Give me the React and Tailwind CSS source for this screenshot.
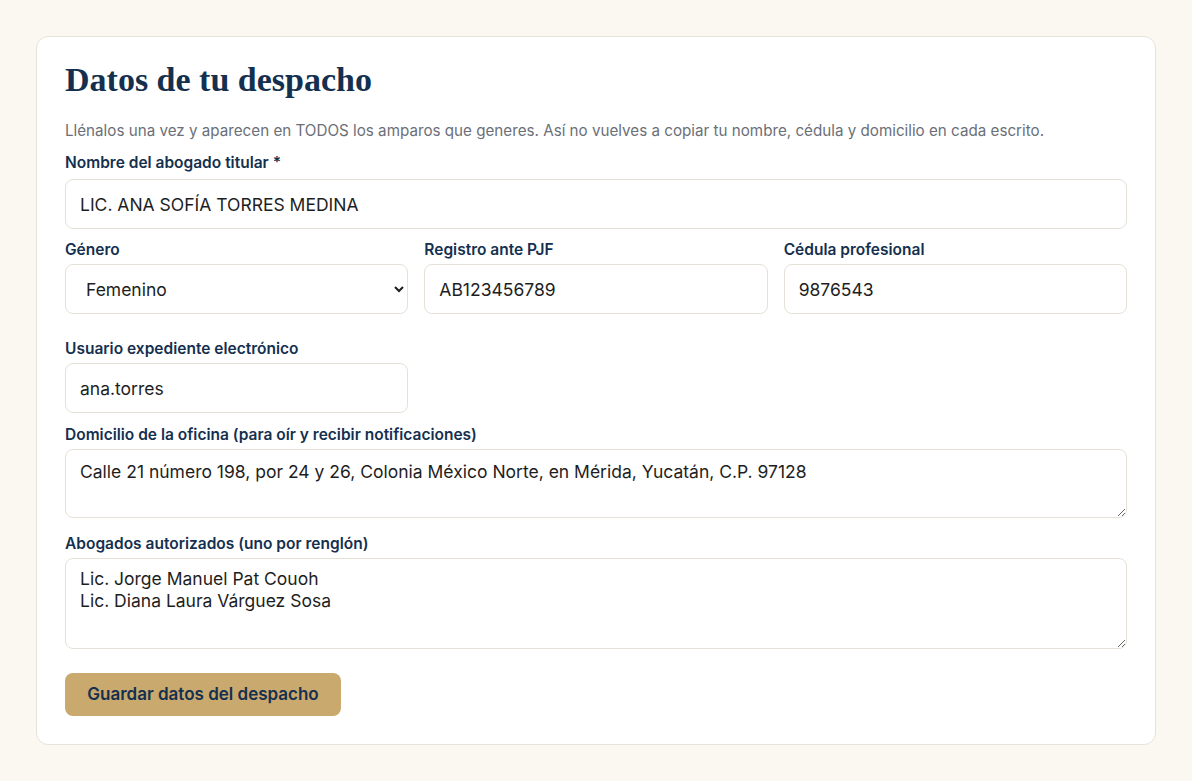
export default function App() {
  const label = "block text-[15.5px] font-semibold text-[#15304f] leading-[20px] mb-[4px]";
  const input = "w-full h-[50px] rounded-[8px] border border-[#e6e1d6] bg-white px-[14px] text-[17.5px] text-[#1e1e1e] outline-none";
  const ta = "block w-full rounded-[8px] border border-[#e6e1d6] bg-white px-[14px] text-[17.5px] leading-[22px] text-[#1e1e1e] outline-none";
  return (
    <div className="min-h-[781px] bg-[#fbf8f1] p-[36px]" style={{ fontFamily: "Inter, 'Noto Sans', sans-serif" }}>
      <div className="rounded-[12px] border border-[#e8e3d8] bg-white px-[28px] pt-[24px] pb-[28px]">
        <h1 className="text-[34px] font-bold text-[#15304f] leading-[38px]" style={{ fontFamily: "'Liberation Serif', 'DejaVu Serif', serif" }}>Datos de tu despacho</h1>
        <p className="mt-[22px] text-[15.2px] text-[#6b6f78] leading-[20px] whitespace-nowrap">Llénalos una vez y aparecen en TODOS los amparos que generes. Así no vuelves a copiar tu nombre, cédula y domicilio en cada escrito.</p>
        <div className="mt-[12px]">
          <label className={label + " !mb-[6px]"}>Nombre del abogado titular *</label>
          <input className={input} defaultValue="LIC. ANA SOFÍA TORRES MEDINA" />
        </div>
        <div className="mt-[11px] grid grid-cols-3 gap-[16px]">
          <div>
            <label className={label}>Género</label>
            <select className={input + " pl-[16px] pr-[6px]"} defaultValue="Femenino"><option>Femenino</option></select>
          </div>
          <div>
            <label className={label}>Registro ante PJF</label>
            <input className={input} defaultValue="AB123456789" />
          </div>
          <div>
            <label className={label}>Cédula profesional</label>
            <input className={input} defaultValue="9876543" />
          </div>
        </div>
        <div className="mt-[25px] grid grid-cols-3 gap-[16px]">
          <div>
            <label className={label}>Usuario expediente electrónico</label>
            <input className={input} defaultValue="ana.torres" />
          </div>
        </div>
        <div className="mt-[12px]">
          <label className={label}>Domicilio de la oficina (para oír y recibir notificaciones)</label>
          <textarea className={ta + " h-[69px] py-[11px]"} defaultValue="Calle 21 número 198, por 24 y 26, Colonia México Norte, en Mérida, Yucatán, C.P. 97128" />
        </div>
        <div className="mt-[16px]">
          <label className={label}>Abogados autorizados (uno por renglón)</label>
          <textarea className={ta + " h-[91px] py-[9px]"} defaultValue={"Lic. Jorge Manuel Pat Couoh\nLic. Diana Laura Várguez Sosa"} />
        </div>
        <button className="mt-[24px] h-[43px] w-[276px] rounded-[8px] bg-[#c9a96e] text-[17px] font-semibold text-[#15304f]">Guardar datos del despacho</button>
      </div>
    </div>
  );
}
